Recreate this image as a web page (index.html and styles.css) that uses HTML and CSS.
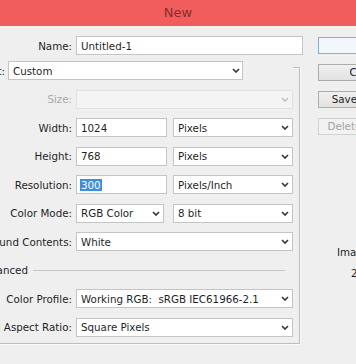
FILE: index.html
```html
<!DOCTYPE html>
<html>
	<head>
		<meta charset="UTF-8">
		<title>New</title>
		<link rel="stylesheet" href="styles.css">
	</head>
	<body>
		<div class="titlebar">New</div>
		<div class="dialog">
			<div class="main">
				<div class="row">
					<span class="label">Name:</span>
					<div class="field name-field">Untitled-1</div>
				</div>
				<div class="group">
					<div class="row legend">
						<span class="label label-preset">Preset:</span>
						<div class="select preset-select">Custom<svg class="chev" viewBox="0 0 8 5" width="8" height="5"><path d="M1 1l3 3 3-3"/></svg></div>
					</div>
					<div class="row">
						<span class="label disabled">Size:</span>
						<div class="select wide disabled-select"><svg class="chev" viewBox="0 0 8 5" width="8" height="5"><path d="M1 1l3 3 3-3"/></svg></div>
					</div>
					<div class="row">
						<span class="label">Width:</span>
						<div class="field num-field">1024</div>
						<div class="select unit-select">Pixels<svg class="chev" viewBox="0 0 8 5" width="8" height="5"><path d="M1 1l3 3 3-3"/></svg></div>
					</div>
					<div class="row">
						<span class="label">Height:</span>
						<div class="field num-field">768</div>
						<div class="select unit-select">Pixels<svg class="chev" viewBox="0 0 8 5" width="8" height="5"><path d="M1 1l3 3 3-3"/></svg></div>
					</div>
					<div class="row">
						<span class="label">Resolution:</span>
						<div class="field num-field"><span class="selected">300</span></div>
						<div class="select unit-select">Pixels/Inch<svg class="chev" viewBox="0 0 8 5" width="8" height="5"><path d="M1 1l3 3 3-3"/></svg></div>
					</div>
					<div class="row">
						<span class="label">Color Mode:</span>
						<div class="select mode-select">RGB Color<svg class="chev" viewBox="0 0 8 5" width="8" height="5"><path d="M1 1l3 3 3-3"/></svg></div>
						<div class="select unit-select">8 bit<svg class="chev" viewBox="0 0 8 5" width="8" height="5"><path d="M1 1l3 3 3-3"/></svg></div>
					</div>
					<div class="row">
						<span class="label">Background Contents:</span>
						<div class="select wide">White<svg class="chev" viewBox="0 0 8 5" width="8" height="5"><path d="M1 1l3 3 3-3"/></svg></div>
					</div>
					<div class="row advanced">
						<span class="label label-adv">Advanced</span>
						<div class="rule"></div>
					</div>
					<div class="row profile">
						<span class="label">Color Profile:</span>
						<div class="select wide">Working RGB:&nbsp; sRGB IEC61966-2.1<svg class="chev" viewBox="0 0 8 5" width="8" height="5"><path d="M1 1l3 3 3-3"/></svg></div>
					</div>
					<div class="row">
						<span class="label">Pixel Aspect Ratio:</span>
						<div class="select wide">Square Pixels<svg class="chev" viewBox="0 0 8 5" width="8" height="5"><path d="M1 1l3 3 3-3"/></svg></div>
					</div>
				</div>
			</div>
			<div class="side">
				<div class="btn btn-default">OK</div>
				<div class="btn">Cancel</div>
				<div class="btn">Save Preset...</div>
				<div class="btn btn-disabled">Delete Preset...</div>
				<div class="info">
					<div>Image Size:</div>
					<div class="info-value">2.25M</div>
				</div>
			</div>
		</div>
	</body>
</html>
```

FILE: styles.css
```css
body {
	margin: 0;
	width: 356px;
	height: 364px;
	overflow: hidden;
	background-color: #efefef;
	font-family: "DejaVu Sans", sans-serif;
	font-size: 10.3px;
	color: #1f1f1f;
}
.titlebar {
	height: 26px;
	line-height: 26px;
	background-color: #f15d5d;
	color: #8a2c2c;
	font-size: 13px;
	text-align: center;
}
.dialog {
	display: flex;
	padding-top: 10px;
}
.main {
	flex: none;
	width: 303px;
}
.row {
	display: flex;
	align-items: center;
	height: 19px;
}
.label {
	flex: none;
	display: flex;
	justify-content: flex-end;
	width: 72px;
	margin-right: 4px;
	white-space: nowrap;
}
.label.disabled {
	color: #a9a9a9;
}
.field, .select {
	box-sizing: border-box;
	height: 19px;
	display: flex;
	align-items: center;
	padding-left: 4px;
	background-color: #fff;
	border: 1px solid #c4c4c4;
	white-space: nowrap;
}
.name-field {
	width: 227px;
}
.chev {
	margin-left: auto;
	margin-right: 3px;
	fill: none;
	stroke: #3a3a3a;
	stroke-width: 1.7;
}
.group {
	width: 293px;
	margin: 12px 0 0 -40px;
	padding: 0 6px 6px 39px;
	border: 1px solid #bdbdbd;
	box-shadow: 1px 1px 0 #fafafa, inset 1px 1px 0 #fafafa;
}
.group .row + .row {
	margin-top: 9.5px;
}
.legend {
	align-self: flex-start;
	margin-top: -7px;
	padding-right: 5px;
	background-color: #efefef;
}
.label-preset {
	width: 5px;
	margin-right: 3px;
}
.preset-select {
	width: 235px;
}
.preset-select .chev {
	margin-right: 2px;
}
.wide {
	width: 217px;
}
.disabled-select {
	background-color: #f4f4f4;
	border-color: #e2e2e2;
}
.disabled-select .chev {
	stroke: #c2c2c2;
}
.num-field {
	width: 91px;
	margin-right: 6px;
}
.mode-select {
	width: 88px;
	margin-right: 9px;
}
.unit-select {
	width: 120px;
}
.selected {
	background-color: #3d8ee0;
	color: #fff;
	padding: 0 1px;
	margin-left: -1px;
}
.group .advanced {
	margin-top: 16px;
}
.label-adv {
	width: 28px;
	margin-right: 5px;
}
.rule {
	flex: 1;
	height: 1px;
	margin-right: 8px;
	background-color: #c6c6c6;
}
.group .profile {
	margin-top: 18px;
}
.side {
	flex: none;
	width: 98px;
	margin-left: 15px;
	padding-top: 1px;
	display: flex;
	flex-direction: column;
}
.btn {
	box-sizing: border-box;
	height: 17px;
	line-height: 15px;
	margin-bottom: 10px;
	text-align: center;
	white-space: nowrap;
	border: 1px solid #acacac;
	background: linear-gradient(#f0f0f0, #e2e2e2);
}
.btn-default {
	border-color: #7eb2e6;
	background: #f3f7fb;
}
.btn-disabled {
	color: #a4a4a4;
	border-color: #d0d0d0;
	background: #f2f2f2;
}
.info {
	margin-top: 101px;
	text-align: center;
	line-height: 12px;
}
.info-value {
	margin-top: 9px;
}
```
